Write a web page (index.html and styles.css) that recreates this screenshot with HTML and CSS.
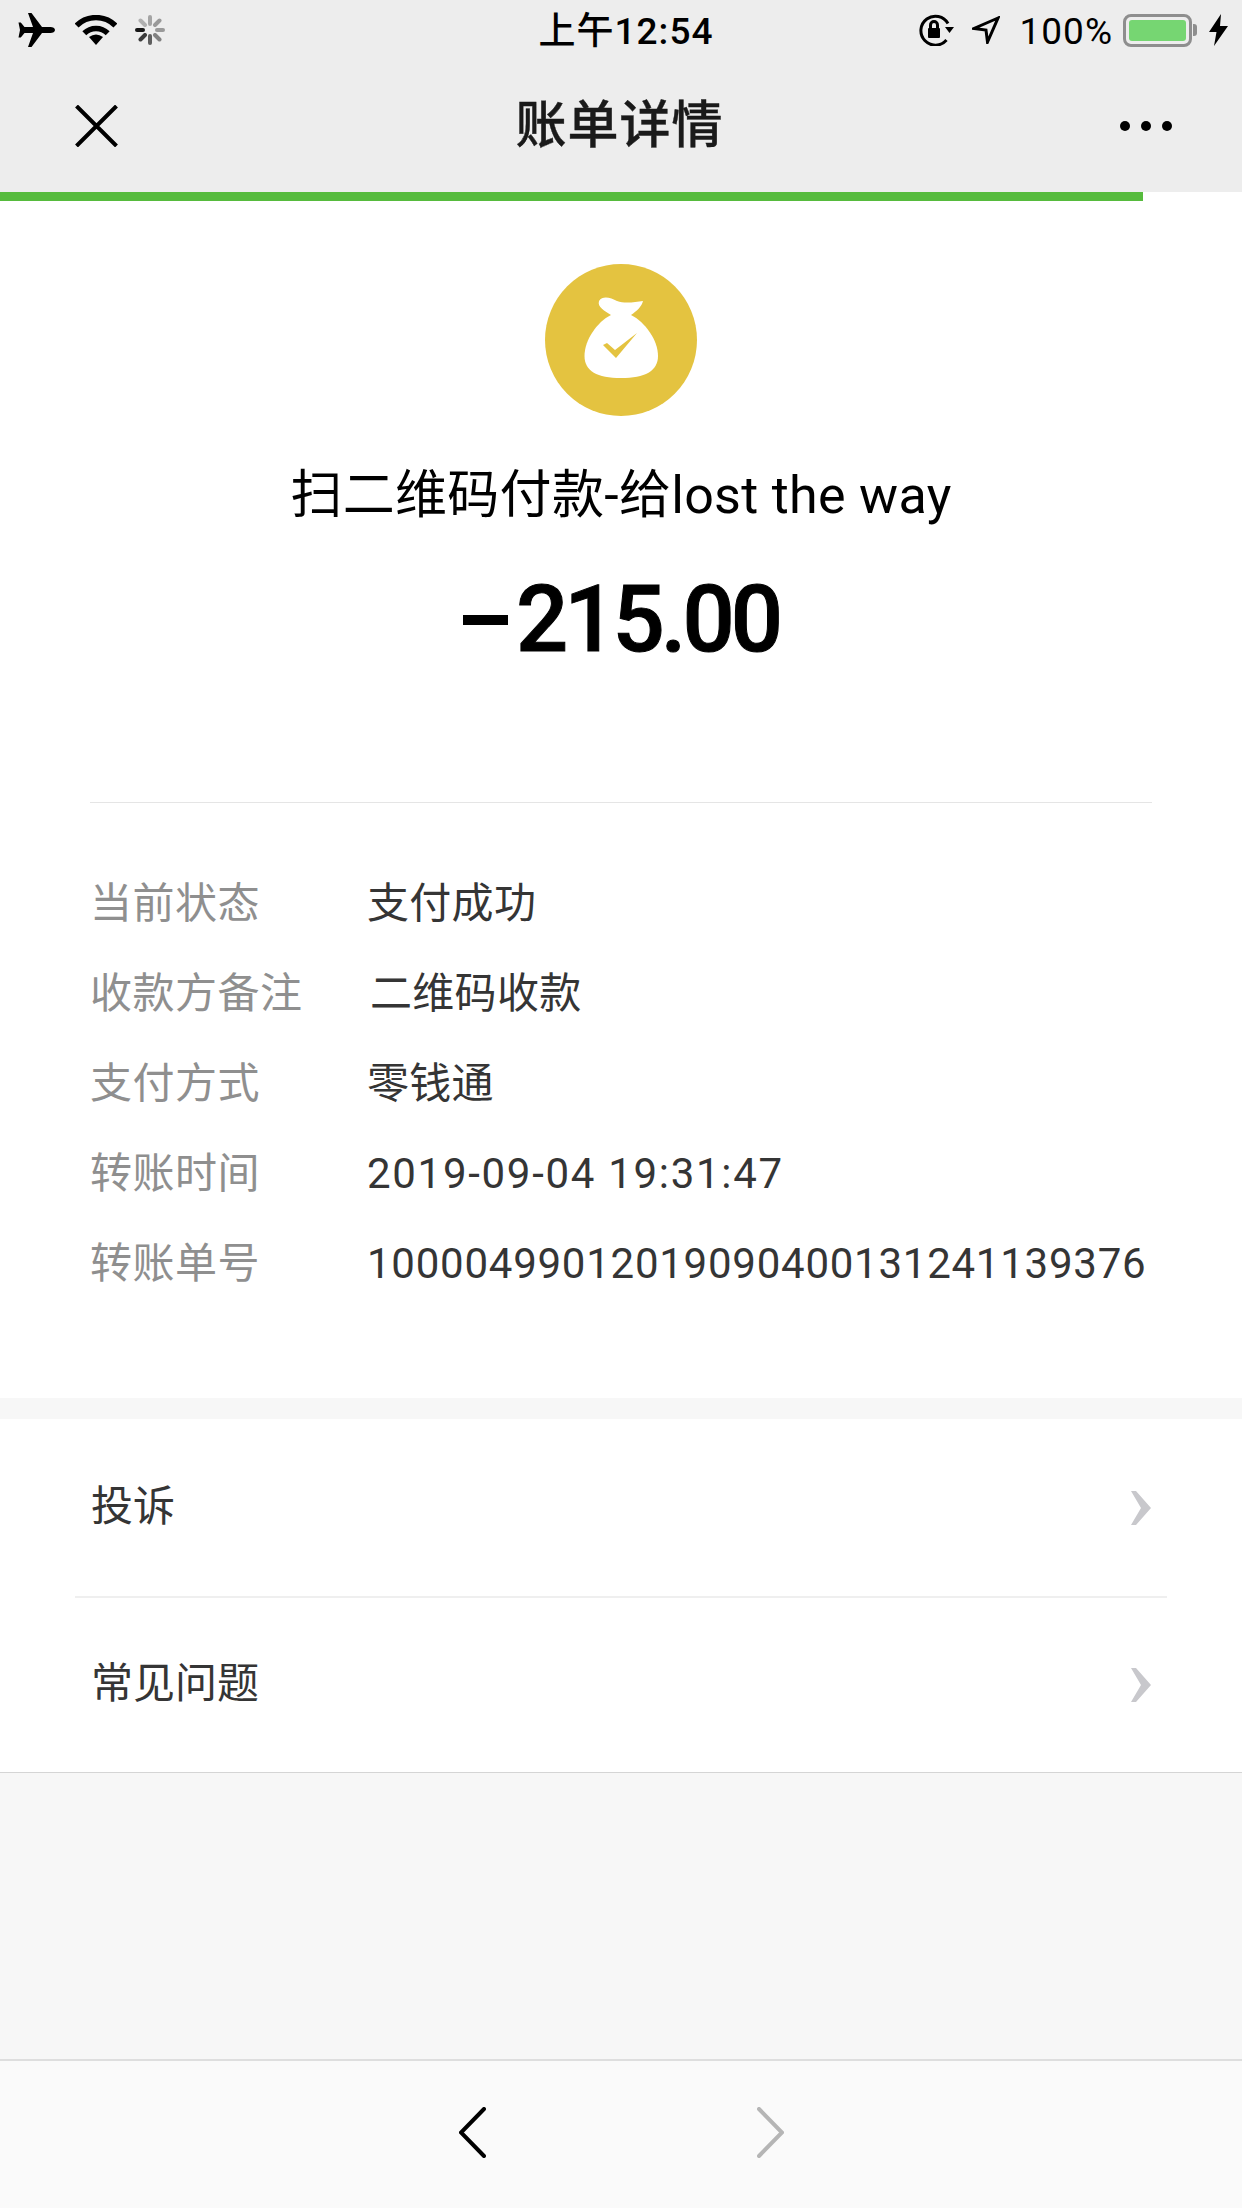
FILE: index.html
```html
<!DOCTYPE html>
<html lang="zh-CN">
  <head>
    <meta charset="UTF-8" />
    <title>账单详情</title>
    <link rel="stylesheet" href="styles.css">
  </head>
  <body>
    <div class="top-bar">
      <div class="status">
        <div class="status-left">
          <svg class="icon-plane" viewBox="0 0 37 34"><path d="M37 17c0-1.800-2.200-3-4.500-3H24L13.500 0H10l5 14H6.500L2.800 9.500H0.500L2 17 0.500 24.500H2.800L6.500 20H15l-5 14h3.500L24 20h8.500c2.300 0 4.500-1.200 4.500-3z"/></svg>
          <svg class="icon-wifi" viewBox="0 0 42 30">
            <path class="wifi-arc" d="M1.600 10.600a27.500 27.500 0 0 1 38.800 0"/>
            <path class="wifi-arc" d="M9.300 18.300a16.500 16.500 0 0 1 23.400 0"/>
            <path d="M21 30l-7-8q7-5 14 0z"/>
          </svg>
          <svg class="icon-spinner" viewBox="0 0 32 30">
            <line x1="16" y1="2" x2="16" y2="9" opacity="0.3"/>
            <line x1="25.500" y1="5.500" x2="21" y2="10" opacity="0.35"/>
            <line x1="29" y1="15" x2="23" y2="15" opacity="0.35"/>
            <line x1="25.500" y1="24.500" x2="21" y2="20" opacity="0.45"/>
            <line x1="16" y1="28" x2="16" y2="21" opacity="0.6"/>
            <line x1="6.500" y1="24.500" x2="11" y2="20" opacity="0.75"/>
            <line x1="3" y1="15" x2="9" y2="15" opacity="0.9"/>
            <line x1="6.500" y1="5.500" x2="11" y2="10" opacity="0.25"/>
          </svg>
        </div>
        <div class="clock">上午12:54</div>
        <div class="status-right">
          <svg class="icon-lock" viewBox="0 0 36 32">
            <path class="thin" d="M30 9.500A14.500 14.500 0 1 0 28.500 26"/>
            <path d="M27 13h9l-4.500 6z"/>
            <rect x="10" y="14" width="12" height="10" rx="1"/>
            <path class="thin" d="M12.500 14v-3a3.500 3.500 0 0 1 7 0v3"/>
          </svg>
          <svg class="icon-arrow" viewBox="0 0 28 28"><path class="thin" d="M26 2L2 12.500l12 1.500 1.500 12z"/></svg>
          <span class="battery-text">100%</span>
          <div class="battery"><div class="battery-fill"></div></div>
          <div class="battery-nub"></div>
          <svg class="icon-bolt" viewBox="0 0 19 32"><path d="M12 0L0 18h7.500L5 32 19 12h-8z"/></svg>
        </div>
      </div>
      <div class="navbar">
        <svg class="icon-close" viewBox="0 0 43 42"><path d="M1.500 1l40 40M41.500 1l-40 40"/></svg>
        <div class="nav-title">账单详情</div>
        <div class="nav-more"><span></span><span></span><span></span></div>
      </div>
    </div>
    <div class="progress"><div class="progress-bar"></div></div>

    <div class="bill">
      <div class="hero">
        <svg class="bag-icon" viewBox="0 0 152 152">
          <circle cx="76" cy="76" r="76" fill="#e4c340"/>
          <path fill="#fff" d="M54 37C58 31 66 34 72 37C80 40 90 38 98 37C97 42 92 47 86 51L66 51C60 47 52 43 54 37Z"/>
          <path fill="#fff" d="M66 51L86 51C100 58 113 76 113 92C113 107 100 114 76 114C52 114 39.500 107 39.500 92C39.500 76 52 58 66 51Z"/>
          <path fill="#e4c340" d="M58 81L62 79L70 86L92 69L71 94Z"/>
        </svg>
        <div class="bill-title">扫二维码付款-给lost the way</div>
        <div class="bill-amount"><span class="minus"></span>215.00</div>
      </div>
      <div class="details">
        <div class="row"><div class="label">当前状态</div><div class="value">支付成功</div></div>
        <div class="row"><div class="label">收款方备注</div><div class="value note">二维码收款</div></div>
        <div class="row"><div class="label">支付方式</div><div class="value">零钱通</div></div>
        <div class="row"><div class="label">转账时间</div><div class="value number date">2019-09-04 19:31:47</div></div>
        <div class="row"><div class="label">转账单号</div><div class="value number">10000499012019090400131241139376</div></div>
      </div>
    </div>

    <div class="links">
      <div class="link">
        <span class="link-text">投诉</span>
        <svg class="chevron" viewBox="0 0 20 34"><path d="M0 0l5 0 15 17-15 17-5 0 10-17z"/></svg>
      </div>
      <div class="link-divider"></div>
      <div class="link">
        <span class="link-text">常见问题</span>
        <svg class="chevron" viewBox="0 0 20 34"><path d="M0 0l5 0 15 17-15 17-5 0 10-17z"/></svg>
      </div>
    </div>

    <div class="filler"></div>

    <div class="toolbar">
      <svg class="nav-arrow" viewBox="0 0 27 51"><path d="M25 2L2 25.500 25 49"/></svg>
      <svg class="nav-arrow disabled" viewBox="0 0 27 51"><path d="M2 2l23 23.500L2 49"/></svg>
    </div>
  </body>
</html>
```

FILE: styles.css
```css
* {
  box-sizing: border-box;
}
body {
  margin: 0;
  height: 2208px;
  display: flex;
  flex-direction: column;
  background-color: #f7f7f7;
  font-family: Roboto, "Noto Sans CJK SC", sans-serif;
  overflow: hidden;
}
.top-bar {
  height: 192px;
  background-color: #ededed;
  color: #000;
}
.status {
  height: 60px;
  display: grid;
  grid-template-columns: 1fr auto 1fr;
  align-items: center;
  padding: 0 14px 0 18px;
}
.status-left {
  display: flex;
  align-items: center;
  gap: 20px;
}
.status-right {
  display: flex;
  align-items: center;
  justify-content: flex-end;
}
.clock {
  font-size: 37px;
  font-weight: 500;
  line-height: 44px;
  letter-spacing: 1px;
  margin: 3px 0 0 6px;
}
.icon-plane {
  width: 37px;
  height: 34px;
}
.icon-wifi {
  width: 42px;
  height: 30px;
}
.wifi-arc {
  fill: none;
  stroke: #000;
  stroke-width: 5.500px;
}
.icon-spinner {
  width: 32px;
  height: 30px;
  margin-left: -3px;
  stroke: #000;
  stroke-width: 4px;
  stroke-linecap: round;
}
.thin {
  fill: none;
  stroke: #000;
  stroke-width: 3px;
}
.icon-lock {
  width: 36px;
  height: 32px;
  margin-right: 18px;
}
.icon-arrow {
  width: 28px;
  height: 28px;
  margin-right: 20px;
}
.battery-text {
  font-size: 37px;
  line-height: 44px;
  letter-spacing: 1px;
  margin: 3px 10px 0 0;
}
.battery {
  width: 69px;
  height: 33px;
  border: 3px solid #8e8e8e;
  border-radius: 8px;
  padding: 3px;
}
.battery-fill {
  height: 100%;
  background-color: #76d672;
  border-radius: 3px;
}
.battery-nub {
  width: 4px;
  height: 12px;
  margin-left: 1px;
  background-color: #8e8e8e;
  border-radius: 0 3px 3px 0;
}
.icon-bolt {
  width: 19px;
  height: 32px;
  margin-left: 12px;
}
.navbar {
  height: 132px;
  display: flex;
  align-items: center;
  justify-content: space-between;
  padding: 0 70px 0 75px;
}
.icon-close {
  width: 43px;
  height: 42px;
  fill: none;
  stroke: #000;
  stroke-width: 4px;
}
.nav-title {
  font-size: 51px;
  font-weight: 500;
  line-height: 60px;
  color: #1a1a1a;
  letter-spacing: 1px;
  margin-left: 1px;
  -webkit-text-stroke: 0.4px #1a1a1a;
}
.nav-more {
  display: flex;
  gap: 11px;
}
.nav-more span {
  width: 10px;
  height: 10px;
  border-radius: 50%;
  background-color: #000;
}
.progress {
  height: 9px;
  background-color: #fff;
}
.progress-bar {
  width: 1143px;
  height: 100%;
  background-color: #56bb3d;
}
.bill {
  height: 1197px;
  padding: 63px 90px 0;
  background-color: #fff;
}
.hero {
  height: 539px;
  display: flex;
  flex-direction: column;
  align-items: center;
  border-bottom: 1px solid #e5e5e5;
}
.bag-icon {
  width: 152px;
  height: 152px;
}
.bill-title {
  margin-top: 47px;
  font-size: 52px;
  line-height: 66px;
  letter-spacing: 0.300px;
  color: #000;
}
.bill-amount {
  display: flex;
  align-items: center;
  margin-top: 33px;
  font-size: 92px;
  font-weight: 500;
  line-height: 116px;
  letter-spacing: -4px;
  color: #000;
  -webkit-text-stroke: 1px #000;
}
.minus {
  width: 45px;
  height: 10px;
  margin-right: 8px;
  background-color: #000;
}
.details {
  padding-top: 55px;
}
.row {
  height: 90px;
  display: grid;
  grid-template-columns: 277px 1fr;
  align-items: center;
  font-size: 42px;
  white-space: nowrap;
}
.label {
  padding-bottom: 8px;
  color: #8f8f8f;
  letter-spacing: 0.500px;
}
.value {
  padding-bottom: 8px;
  color: #353535;
  letter-spacing: 0.300px;
}
.value.note {
  padding-left: 3px;
}
.value.number {
  padding-bottom: 0;
  letter-spacing: 0.750px;
}
.value.date {
  letter-spacing: 1.700px;
}
.links {
  margin-top: 21px;
  background-color: #fff;
  border-bottom: 1px solid #d5d5d5;
}
.link {
  height: 177px;
  display: flex;
  align-items: center;
  justify-content: space-between;
  padding: 0 91px;
  font-size: 42px;
  color: #353535;
}
.link:last-child {
  height: 174px;
}
.link-text {
  padding-bottom: 11px;
}
.link-divider {
  height: 2px;
  margin: 0 75px;
  background-color: #efefef;
}
.chevron {
  width: 20px;
  height: 34px;
  fill: #c8c8cc;
}
.filler {
  flex: 1;
}
.toolbar {
  height: 149px;
  display: flex;
  align-items: center;
  justify-content: center;
  gap: 271px;
  padding-bottom: 4px;
  background-color: #fafafa;
  border-top: 2px solid #dedede;
}
.nav-arrow {
  width: 27px;
  height: 51px;
  fill: none;
  stroke: #000;
  stroke-width: 4px;
  stroke-linecap: round;
}
.nav-arrow.disabled {
  stroke: #b5b5b5;
}
```
